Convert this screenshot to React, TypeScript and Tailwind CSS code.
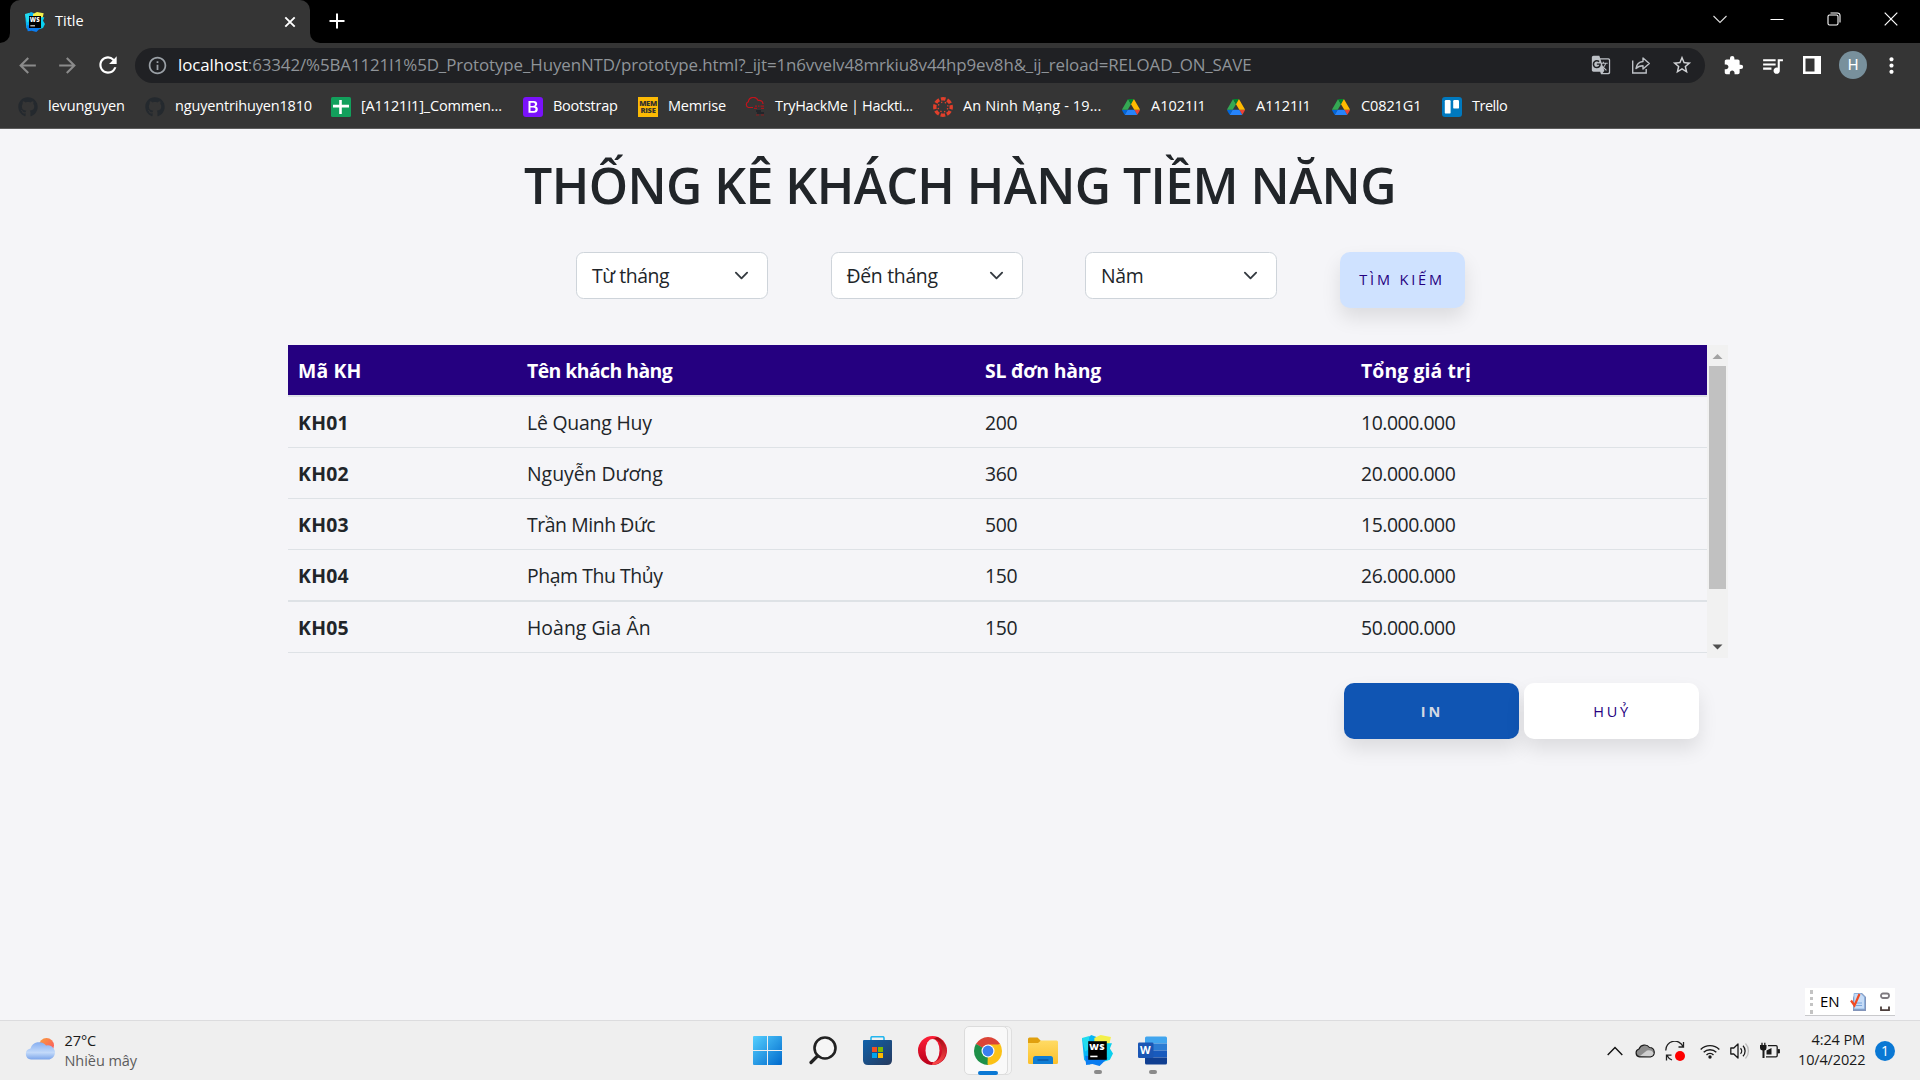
import type { ReactNode } from "react";
import { FaGithub } from "react-icons/fa";
import {
  MdArrowBack,
  MdArrowForward,
  MdExtension,
  MdGTranslate,
  MdMoreVert,
  MdOutlineInfo,
  MdQueueMusic,
  MdRefresh,
  MdStarBorder,
} from "react-icons/md";

/* ---------- logos ---------- */

function WebStormLogo({ className }: { className: string }) {
  return (
    <svg viewBox="0 0 30 30" className={className}>
      <path d="M0 3 L5 3 L9 0 L14 2 L13 16 L7 29 L2 24 Z" fill="#08b6f5" />
      <path d="M12 3 L18 0 L28 2 L26 11 L12 8 Z" fill="#f4f04a" />
      <path d="M24 8 L29 8 L27 13 L30 18 L27 24 L21 26 L20 12 Z" fill="#0ad0ee" />
      <path d="M3 20 L25 22 L20 27 L17 30 L10 28 L4 29 Z" fill="#0a7cf0" />
      <path d="M0 3 L7 1 L6 14 L3 16 Z" fill="#22dcee" />
      <rect x="6" y="6" width="18" height="18" fill="#000" />
      <text x="7" y="14.8" fontSize="9" fontWeight="800" fill="#fff" fontFamily="Open Sans, sans-serif" textLength="15">
        WS
      </text>
      <rect x="8" y="20" width="7" height="1.5" fill="#fff" />
    </svg>
  );
}

function SheetsLogo() {
  return (
    <svg viewBox="0 0 20 20" className="size-5">
      <rect width="20" height="20" rx="1.5" fill="#12a05c" />
      <path d="M8.2 3h2.6v4.8H18v2.6h-7.2V17H8.2v-6.600H2V7.800h6.200z" fill="#fff" />
    </svg>
  );
}

function BootstrapLogo() {
  return (
    <svg viewBox="0 0 20 20" className="size-5">
      <rect width="20" height="20" rx="3" fill="#7a12fb" />
      <path
        d="M5.500 4h5.300c2.100 0 3.400 1.100 3.400 2.900 0 1.200-.8 2.200-1.900 2.400 1.500.2 2.500 1.300 2.500 2.900 0 2.300-1.500 3.600-4 3.600H5.500zM7.500 5.700v3.200h2.400c1.400 0 2.100-.5 2.100-1.600s-.7-1.600-1.900-1.600zm0 4.700v3.700h2.800c1.500 0 2.200-.6 2.200-1.800s-.8-1.900-2.300-1.900z"
        fill="#fff"
      />
    </svg>
  );
}

function MemriseLogo() {
  return (
    <span className="flex size-5 flex-col items-center justify-center bg-[#fcba04] text-[7.5px] leading-[7px] font-extrabold tracking-[-0.3px] text-[#35322c]">
      <span>MEM</span>
      <span>RISE</span>
    </span>
  );
}

function TryHackMeLogo() {
  return (
    <svg viewBox="0 0 20 20" className="size-5" fill="none">
      <path d="M8 10.500H3.500A3 3 0 0 1 3.300 4.800 5.200 5.200 0 0 1 13.200 3.500a3.700 3.700 0 0 1 4.800 3.500" stroke="#c3141c" strokeWidth="1.2" />
      <path d="M10 9.200h2M13 9.200h1.500M15.500 9.200h3.500M9 11.300h3M16 11.300h3" stroke="#a5161c" strokeWidth="1.2" />
      <path d="M11 14h5M12 16h7" stroke="#1c2027" strokeWidth="1.3" />
      <path d="M11 18h3M16 18h3" stroke="#8c1a1c" strokeWidth="1.2" />
    </svg>
  );
}

function CanvasLogo() {
  return (
    <svg viewBox="0 0 20 20" className="size-5" fill="none">
      <circle cx="10" cy="10" r="8.2" stroke="#e13f2b" strokeWidth="3.4" strokeDasharray="4.64 1.8" strokeDashoffset="2.32" />
      <circle cx="10" cy="10" r="4.9" stroke="#e13f2b" strokeWidth="1.4" strokeDasharray="1.3 2.548" strokeDashoffset="-1.25" />
    </svg>
  );
}

function DriveLogo() {
  return (
    <svg viewBox="0 0 87.3 78" className="h-4 w-[18px]">
      <path d="m6.6 66.850 3.850 6.650c.8 1.400 1.950 2.500 3.300 3.300l13.750-23.800h-27.500c0 1.550.4 3.100 1.200 4.500z" fill="#0066da" />
      <path d="m43.650 25-13.750-23.800c-1.350.8-2.500 1.900-3.300 3.300l-25.400 44a9.060 9.060 0 0 0 -1.200 4.500h27.500z" fill="#34a853" />
      <path d="m73.550 76.800c1.350-.8 2.500-1.900 3.300-3.300l1.600-2.750 7.650-13.250c.8-1.400 1.200-2.950 1.200-4.500h-27.502l5.852 11.500z" fill="#ea4335" />
      <path d="m43.650 25 13.750-23.800c-1.350-.8-2.900-1.200-4.500-1.200h-18.500c-1.600 0-3.150.45-4.500 1.200z" fill="#00832d" />
      <path d="m59.800 53h-32.300l-13.750 23.800c1.350.8 2.900 1.200 4.500 1.200h50.800c1.600 0 3.150-.45 4.500-1.200z" fill="#2684fc" />
      <path d="m73.400 26.500-12.700-22c-.8-1.400-1.950-2.500-3.300-3.300l-13.750 23.800 16.150 28h27.450c0-1.550-.4-3.100-1.200-4.500z" fill="#ffba00" />
    </svg>
  );
}

function TrelloLogo() {
  return (
    <svg viewBox="0 0 20 20" className="size-5">
      <rect width="20" height="20" rx="3" fill="#0079bf" />
      <rect x="2.8" y="3" width="5.8" height="13.6" rx="1.2" fill="#fff" />
      <rect x="11.2" y="3" width="5.8" height="8.6" rx="1.2" fill="#fff" />
    </svg>
  );
}

/* ---------- browser chrome ---------- */

function TabStrip() {
  return (
    <div className="flex h-[43px] bg-black">
      <div className="flex w-[10px] items-end bg-[#353535]">
        <div className="h-full w-full rounded-br-[10px] bg-black" />
      </div>
      <div className="w-[300px] bg-black">
        <div className="flex h-[43px] items-center rounded-t-[10px] bg-[#353535] pl-[15px]">
          <WebStormLogo className="size-5" />
          <span className="ml-[10px] pb-[2px] text-[14.5px] text-white">Title</span>
          <svg viewBox="0 0 12 12" className="mr-[14px] ml-auto size-[12px]" stroke="#fff" strokeWidth="1.9">
            <path d="M1.300 1.300 10.700 10.700M10.700 1.300 1.300 10.700" />
          </svg>
        </div>
      </div>
      <div className="w-[10px] bg-[#353535]">
        <div className="h-full w-full rounded-bl-[10px] bg-black" />
      </div>
      <svg viewBox="0 0 16 16" className="mt-[13px] ml-[9px] size-4" stroke="#fff" strokeWidth="2">
        <path d="M8 .5v15M.5 8h15" />
      </svg>
      <div className="mt-[11px] mr-[22px] ml-auto flex h-4 items-center gap-[43px]">
        <svg viewBox="0 0 14 14" className="size-[14px]" stroke="#ddd" fill="none" strokeWidth="1.1">
          <path d="m.5 4 6.500 6.500L13.500 4" />
        </svg>
        <svg viewBox="0 0 14 14" className="size-[14px]" stroke="#fff" strokeWidth="1">
          <path d="M.5 7.500h13" />
        </svg>
        <svg viewBox="0 0 14 14" className="size-[14px]" stroke="#fff" fill="none" strokeWidth="1.1">
          <rect x="1" y="3" width="10" height="10" rx="1.5" />
          <path d="M3.500 1h7A2.500 2.500 0 0 1 13 3.500v7" />
        </svg>
        <svg viewBox="0 0 14 14" className="size-[14px]" stroke="#fff" strokeWidth="1.2">
          <path d="m.7.7 12.600 12.600M13.300.7.7 13.300" />
        </svg>
      </div>
    </div>
  );
}

function ShareIcon() {
  return (
    <svg viewBox="0 0 20 20" className="size-5" fill="none" stroke="#bdc1c6" strokeWidth="1.4">
      <path d="M1.700 5.500V18h13.500v-4" />
      <path d="M5 13.500c.6-4.300 3-6.700 7-7V3l6.300 5.500L12 14v-3.300c-3.200 0-5.400.9-7 2.800z" strokeLinejoin="round" />
    </svg>
  );
}

function Toolbar() {
  return (
    <div className="flex h-[43px] items-center pt-px pr-[15px] pl-[15px]">
      <MdArrowBack className="size-[25px] text-[#8b8b8b]" />
      <MdArrowForward className="ml-[15px] size-[25px] text-[#8b8b8b]" />
      <MdRefresh className="ml-[15px] size-[26px] text-white" />
      <div className="ml-[14px] flex h-[35px] w-[1570px] items-center rounded-full bg-[#202124] pr-[12px] pl-3">
        <MdOutlineInfo className="size-[21px] text-[#9aa0a6]" />
        <div className="ml-[10px] text-[16.9px] tracking-[-0.1px] whitespace-nowrap text-[#8f9499]">
          <span className="text-white">localhost</span>
          :63342/%5BA1121I1%5D_Prototype_HuyenNTD/prototype.html?_ijt=1n6vvelv48mrkiu8v44hp9ev8h&amp;_ij_reload=RELOAD_ON_SAVE
        </div>
        <div className="ml-auto flex items-center gap-[20px]">
          <MdGTranslate className="size-5 text-[#bdc1c6]" />
          <ShareIcon />
          <MdStarBorder className="size-[22px] text-[#d0d2d5]" />
        </div>
      </div>
      <MdExtension className="ml-[18px] size-[21px] text-white" />
      <MdQueueMusic className="ml-[16px] size-[25px] text-white" />
      <svg viewBox="0 0 18 18" className="ml-[18px] size-[18px]">
        <path d="M0 0h18v18H0zM2.500 2.500v13h9v-13z" fill="#fff" fillRule="evenodd" />
      </svg>
      <div className="ml-[18px] flex size-7 items-center justify-center rounded-full bg-[#78909c] font-[Roboto] text-[15px] text-white">
        H
      </div>
      <MdMoreVert className="ml-[12px] size-[25px] shrink-0 text-white" />
    </div>
  );
}

const github = <FaGithub className="size-5 text-[#24292e]" />;
const drive = <DriveLogo />;

const bookmarks: { icon: ReactNode; label: string; width: string; tracking: string }[] = [
  { icon: github, label: "levunguyen", width: "w-[127px]", tracking: "tracking-[-0.1px]" },
  { icon: github, label: "nguyentrihuyen1810", width: "w-[186px]", tracking: "tracking-[-0.17px]" },
  { icon: <SheetsLogo />, label: "[A1121I1]_Commen...", width: "w-[192px]", tracking: "tracking-[-0.15px]" },
  { icon: <BootstrapLogo />, label: "Bootstrap", width: "w-[115px]", tracking: "tracking-[-0.26px]" },
  { icon: <MemriseLogo />, label: "Memrise", width: "w-[107px]", tracking: "tracking-[-0.2px]" },
  { icon: <TryHackMeLogo />, label: "TryHackMe | Hackti...", width: "w-[188px]", tracking: "tracking-[-0.34px]" },
  { icon: <CanvasLogo />, label: "An Ninh Mạng - 19...", width: "w-[188px]", tracking: "tracking-[0.12px]" },
  { icon: drive, label: "A1021I1", width: "w-[105px]", tracking: "tracking-[0px]" },
  { icon: drive, label: "A1121I1", width: "w-[105px]", tracking: "tracking-[0px]" },
  { icon: drive, label: "C0821G1", width: "w-[111px]", tracking: "tracking-[-0.1px]" },
  { icon: <TrelloLogo />, label: "Trello", width: "w-[90px]", tracking: "tracking-[-0.5px]" },
];

function BookmarksBar() {
  return (
    <div className="flex h-[43px] items-center border-b border-[#5c5c5c] pb-px pl-[18px]">
      {bookmarks.map((b) => (
        <div key={b.label} className={`flex items-center gap-[10px] ${b.width}`}>
          <span className="flex w-5 shrink-0 justify-center">{b.icon}</span>
          <span className={`pb-px text-[14.5px] whitespace-nowrap text-white ${b.tracking}`}>{b.label}</span>
        </div>
      ))}
    </div>
  );
}

/* ---------- page ---------- */

const filters = [
  { label: "Từ tháng", tracking: "tracking-[-0.42px]" },
  { label: "Đến tháng", tracking: "tracking-[-0.3px]" },
  { label: "Năm", tracking: "tracking-[-0.3px]" },
];

function Filters() {
  return (
    <div className="flex gap-[62.5px] pl-[576px]">
      {filters.map((f) => (
        <div
          key={f.label}
          className="flex h-[47px] w-[192px] items-center justify-between rounded-[7.5px] border border-[#ced4da] bg-white pr-[18px] pl-[15px] text-[19.4px] text-[#212529]"
        >
          <span className={f.tracking}>{f.label}</span>
          <svg viewBox="0 0 16 16" className="size-[15px]" fill="none" stroke="#343a40" strokeWidth="2" strokeLinecap="round" strokeLinejoin="round">
            <path d="m2 5 6 6 6-6" />
          </svg>
        </div>
      ))}
      <button className="h-14 w-[125px] rounded-[10px] bg-[#cfe2ff] text-[14.5px] font-medium tracking-[2.85px] whitespace-nowrap text-[#250080] shadow-[0_10px_19px_rgba(0,0,0,0.1)]">
        TÌM KIẾM
      </button>
    </div>
  );
}

const columns = [
  { title: "Mã KH", tracking: "tracking-[0.15px]" },
  { title: "Tên khách hàng", tracking: "tracking-[-0.55px]" },
  { title: "SL đơn hàng", tracking: "tracking-[-0.22px]" },
  { title: "Tổng giá trị", tracking: "tracking-[0.1px]" },
];

const customers = [
  { id: "KH01", name: "Lê Quang Huy", orders: "200", total: "10.000.000", tracking: "tracking-[-0.2px]", row: "h-[53px] border-t-2 border-b" },
  { id: "KH02", name: "Nguyễn Dương", orders: "360", total: "20.000.000", tracking: "tracking-[0px]", row: "h-[51px] border-b" },
  { id: "KH03", name: "Trần Minh Đức", orders: "500", total: "15.000.000", tracking: "tracking-[-0.42px]", row: "h-[51px] border-b" },
  { id: "KH04", name: "Phạm Thu Thủy", orders: "150", total: "26.000.000", tracking: "tracking-[-0.42px]", row: "h-[52px] border-b-2" },
  { id: "KH05", name: "Hoàng Gia Ân", orders: "150", total: "50.000.000", tracking: "tracking-[0.05px]", row: "h-[51px] border-b" },
];

function CustomerTable() {
  return (
    <div className="ml-[288px] flex h-[313px] w-[1440px]">
      <div className="w-[1419px] text-[19.4px] text-[#212529]">
        <div className="grid h-[50px] grid-cols-[229px_458px_376px_356px] items-center bg-[#250080] pt-[2px] font-bold text-white">
          {columns.map((c) => (
            <span key={c.title} className={`pl-[10px] ${c.tracking}`}>
              {c.title}
            </span>
          ))}
        </div>
        {customers.map((c) => (
          <div
            key={c.id}
            className={`grid grid-cols-[229px_458px_376px_356px] items-center border-[#dee2e6] pt-[2px] *:pl-[10px] ${c.row}`}
          >
            <span className="font-bold tracking-[0.25px]">{c.id}</span>
            <span className={c.tracking}>{c.name}</span>
            <span className="tracking-[-0.3px]">{c.orders}</span>
            <span className="tracking-[-0.45px]">{c.total}</span>
          </div>
        ))}
      </div>
      <div className="flex w-[21px] flex-col items-center bg-[#f1f1f1]">
        <svg viewBox="0 0 21 21" className="h-[21px] w-[21px] shrink-0">
          <path d="M5.500 14 10.500 9l5 5z" fill="#a3a3a3" />
        </svg>
        <div className="h-[223px] w-[17px] bg-[#c1c1c1]" />
        <svg viewBox="0 0 21 21" className="mt-auto h-[21px] w-[21px] shrink-0">
          <path d="M5.500 7.500h10l-5 5z" fill="#505050" />
        </svg>
      </div>
    </div>
  );
}

function Page() {
  return (
    <main className="flex h-[891px] flex-col bg-[#f5f5f8]">
      <h1 className="mt-[21px] h-[71px] text-center text-[50px] leading-[70px] font-semibold tracking-[-0.57px] text-[#212529]">
        THỐNG KÊ KHÁCH HÀNG TIỀM NĂNG
      </h1>
      <div className="mt-[31px] h-[93px]">
        <Filters />
      </div>
      <CustomerTable />
      <div className="mt-[25px] flex gap-[5px] pl-[1344px]">
        <button className="h-14 w-[175px] rounded-[10px] bg-[#1055b3] pt-px pl-px text-[14.5px] font-bold tracking-[3px] text-[#d3d9e3] shadow-[0_10px_19px_rgba(0,0,0,0.1)]">
          IN
        </button>
        <button className="h-14 w-[175px] rounded-[10px] bg-white pt-px pl-px text-[14.5px] font-medium tracking-[2.7px] text-[#250080] shadow-[0_10px_19px_rgba(0,0,0,0.1)]">
          HUỶ
        </button>
      </div>
      <div className="mt-auto mr-[25px] mb-[4px] flex h-[28px] w-[90px] items-center self-end border-b border-[#c9c9cc] bg-white pl-[5px]">
        <div className="h-6 border-l-[3px] border-dotted border-[#c3c3c3]" />
        <span className="ml-[7px] text-[15px] tracking-[-0.2px] text-black">EN</span>
        <svg viewBox="0 0 17 20" className="ml-[11px] h-5 w-[17px]">
          <path d="M5 1h7l4 4v14H3V6z" fill="#8294ba" />
          <path d="M4 1.500h7l3.500 3.500v12H4z" fill="#c6dcf7" stroke="#86aede" strokeWidth=".8" />
          <path d="M6 11h6M6 13.500h6" stroke="#7aa6dd" />
          <path d="M1 8.500 4.500 13.500 9.500 2" fill="none" stroke="#f04a23" strokeWidth="2.2" />
        </svg>
        <svg viewBox="0 0 12 20" className="ml-[12px] h-5 w-3" fill="none" strokeWidth="1.8">
          <rect x="2" y="1.5" width="8" height="4.5" rx="2" stroke="#7e7a80" />
          <path d="M2 14.500v3.700h8v-3.700" stroke="#4b3d3a" />
        </svg>
      </div>
    </main>
  );
}

/* ---------- taskbar ---------- */

function StartIcon() {
  return (
    <svg viewBox="0 0 29 29" className="size-[29px]">
      <defs>
        <linearGradient id="start" x1="0" y1="0" x2="1" y2="1">
          <stop offset="0" stopColor="#55d0ff" />
          <stop offset="1" stopColor="#0069cc" />
        </linearGradient>
      </defs>
      <path d="M1 0h13v14H0V1q0-1 1-1zM15 0h13q1 0 1 1v13H15zM0 15h14v14H1q-1 0-1-1zM15 15h14v13q0 1-1 1H15z" fill="url(#start)" />
    </svg>
  );
}

function SearchIcon() {
  return (
    <svg viewBox="0 0 28 29" className="h-[29px] w-7" fill="none" stroke="#222">
      <circle cx="16" cy="12" r="10.5" strokeWidth="2.6" fill="#f6f6f6" />
      <path d="M8.500 20 2 26.500" strokeWidth="3.2" strokeLinecap="round" />
    </svg>
  );
}

function StoreIcon() {
  return (
    <svg viewBox="0 0 29 29" className="size-[29px]">
      <defs>
        <linearGradient id="store" x1="0" y1="0" x2="1" y2="1">
          <stop offset="0" stopColor="#0f62ab" />
          <stop offset="1" stopColor="#263a5e" />
        </linearGradient>
      </defs>
      <path d="M8 5V2q0-1.300 1.300-1.300h10.400Q21 .7 21 2v3" fill="none" stroke="#23b6ee" strokeWidth="1.6" />
      <path d="M0 5q0-1 1-1h27q1 0 1 1v19q0 5-5 5H5q-5 0-5-5z" fill="url(#store)" />
      <path d="M9 11h5v5H9z" fill="#f25022" />
      <path d="M15 11h5v5h-5z" fill="#7fba00" />
      <path d="M9 17h5v5H9z" fill="#00a4ef" />
      <path d="M15 17h5v5h-5z" fill="#ffb900" />
    </svg>
  );
}

function OperaIcon() {
  return (
    <svg viewBox="0 0 29 29" className="size-[29px]">
      <defs>
        <linearGradient id="operaRing" x1="0" y1="0" x2="0" y2="1">
          <stop offset="0" stopColor="#ff2038" />
          <stop offset="1" stopColor="#b8001a" />
        </linearGradient>
        <linearGradient id="operaSide" x1="0" y1="0" x2="0" y2="1">
          <stop offset="0" stopColor="#a00812" />
          <stop offset="1" stopColor="#ff4c4c" />
        </linearGradient>
      </defs>
      <circle cx="14.5" cy="14.5" r="14.5" fill="url(#operaRing)" />
      <path d="M15 3c5 0 9 5 9 11.500S20 26 15 26l-1 3a14.500 14.500 0 0 0 5-28z" fill="url(#operaSide)" />
      <ellipse cx="14.5" cy="14.5" rx="7" ry="11.5" fill="#f1f1f1" />
    </svg>
  );
}

function ChromeIcon() {
  return (
    <svg viewBox="0 0 28 28" className="size-7">
      <path d="M14 14 1.876 7A14 14 0 0 1 26.124 7z" fill="#db4437" />
      <path d="M14 14 26.124 7A14 14 0 0 1 14 28z" fill="#fbc116" />
      <path d="M14 14V28A14 14 0 0 1 1.876 7z" fill="#1e9048" />
      <path d="M14 7.500h12.400L14 14z" fill="#fbc116" />
      <path d="M19.600 17.200 13.500 28l.5-14z" fill="#fbc116" />
      <path d="M8.400 17.200 1.900 7 14 14z" fill="#1e9048" />
      <circle cx="14" cy="14" r="6.5" fill="#fff" />
      <circle cx="14" cy="14" r="5.4" fill="#3a7ff0" />
    </svg>
  );
}

function ExplorerIcon() {
  return (
    <svg viewBox="0 0 30 27" className="h-[27px] w-[30px]">
      <defs>
        <linearGradient id="folder" x1="0" y1="0" x2="0" y2="1">
          <stop offset="0" stopColor="#ffdb65" />
          <stop offset="1" stopColor="#fcc02b" />
        </linearGradient>
      </defs>
      <path d="M0 2q0-1.500 1.500-1.500h8L13 4v5H0z" fill="#e0a00e" />
      <path d="M0 6h10l3-2.500h15.500Q30 3.500 30 5v20.500q0 1.500-1.500 1.500h-27Q0 27 0 25.500z" fill="url(#folder)" />
      <path d="M5 27v-5.500Q5 19 7.500 19h15q2.500 0 2.500 2.500V27z" fill="#0f7dd4" />
      <path d="M9.500 23h11" stroke="#0a4f97" strokeWidth="1.2" />
    </svg>
  );
}

function WordIcon() {
  return (
    <svg viewBox="0 0 29 29" className="size-[29px]">
      <path d="M7 2q0-1.500 1.500-1.500h19Q29 .5 29 2v5.500H7z" fill="#41a5ee" />
      <path d="M7 7.500h22v7H7z" fill="#2b7cd3" />
      <path d="M7 14.500h22v7H7z" fill="#185abd" />
      <path d="M7 21.500h22V27q0 1.500-1.500 1.500h-19Q7 28.500 7 27z" fill="#103f91" />
      <rect y="6.5" width="15.5" height="15.5" rx="1.3" fill="#1b56b4" />
      <text x="2" y="18.3" fontSize="11" fontWeight="700" fill="#fff" fontFamily="Open Sans, sans-serif">
        W
      </text>
    </svg>
  );
}

function WeatherIcon() {
  return (
    <svg viewBox="0 0 30 22" className="h-[22px] w-[30px]">
      <defs>
        <linearGradient id="sun" x1="0" y1="0" x2="1" y2="1">
          <stop offset="0" stopColor="#f9a03c" />
          <stop offset="1" stopColor="#fb4f64" />
        </linearGradient>
        <linearGradient id="cloud" x1="0" y1="0" x2="0" y2="1">
          <stop offset="0" stopColor="#86aef0" />
          <stop offset="0.6" stopColor="#c3dafa" />
          <stop offset="1" stopColor="#7ba5ea" />
        </linearGradient>
      </defs>
      <circle cx="21.5" cy="7.5" r="7.5" fill="url(#sun)" />
      <path d="M6 21.500A5.600 5.600 0 0 1 5.500 10.400 9 9 0 0 1 21 7.500a7 7 0 0 1 3.500 14z" fill="url(#cloud)" />
    </svg>
  );
}

function AppSlot({ children, running }: { children: ReactNode; running?: boolean }) {
  return (
    <div className="relative flex h-full w-[55px] items-center justify-center">
      {children}
      {running && <span className="absolute bottom-[6px] h-1 w-2 rounded-full bg-[#8a8a8a]" />}
    </div>
  );
}

function Tray() {
  return (
    <div className="flex items-center">
      <svg viewBox="0 0 16 10" className="h-[10px] w-4" fill="none" stroke="#111" strokeWidth="1.4">
        <path d="m.7 9 7.300-7.500L15.300 9" />
      </svg>
      <svg viewBox="0 0 20 15" className="ml-3 h-[15px] w-5">
        <path d="M4.500 13.800A4 4 0 0 1 4 6 6 6 0 0 1 14.500 4.500 4.700 4.700 0 0 1 15.500 13.800z" fill="#8c8c8c" stroke="#1c1c1c" strokeWidth="1.2" />
        <path d="M5 13 12 7.500q5-1 6.500 3-.6 2.600-3 2.700z" fill="#cfcfcf" />
      </svg>
      <svg viewBox="0 0 20 20" className="ml-[10px] size-5" fill="none" stroke="#222" strokeWidth="1.3">
        <path d="M.8 9.500A9 9 0 0 1 18 5.500M18.500 1v5h-5M7 19a9 9 0 0 1-5-4.500M1.500 19.500v-5.300h5" />
        <circle cx="15" cy="15" r="5" fill="#fe0000" stroke="none" />
      </svg>
      <svg viewBox="0 0 20 16" className="ml-[15px] h-4 w-5" fill="none" stroke="#1a1a1a" strokeWidth="1.4">
        <path d="M.7 6.500a13 13 0 0 1 18.600 0M3.700 9.300a9 9 0 0 1 12.600 0M6.500 12a5 5 0 0 1 7 0" />
        <circle cx="10" cy="14" r="1.7" fill="#1a1a1a" stroke="none" />
      </svg>
      <svg viewBox="0 0 20 18" className="ml-[10px] h-[18px] w-5" fill="none" stroke="#1a1a1a" strokeWidth="1.3">
        <path d="M.8 6v6h3l4.200 4V2L3.800 6z" strokeLinejoin="round" />
        <path d="M10.500 6.200a4 4 0 0 1 0 5.600M13 3.800a7.500 7.500 0 0 1 0 10.400" />
        <path d="M15.500 1.500a11 11 0 0 1 0 15" stroke="#bbb" />
      </svg>
      <svg viewBox="0 0 20 18" className="ml-[10px] h-[18px] w-5" fill="none" stroke="#1a1a1a" strokeWidth="1.3">
        <path d="M8 3.700h8q1.200 0 1.200 1.200v8.700q0 1.200-1.200 1.200H6" />
        <path d="M18 7.500h1.500v3.500H18z" fill="#1a1a1a" strokeWidth=".8" />
        <path d="M0 3h6.500v3q0 2-2 2.500V16H2.500V8.500Q0 8 0 6z" fill="#1a1a1a" stroke="none" />
        <path d="M2 .8V4M4.800.8V4" />
        <path d="M6.500 8.500 11.500 6v6.500h-5z" fill="#1a1a1a" stroke="none" />
      </svg>
    </div>
  );
}

function Taskbar() {
  return (
    <footer className="flex h-[60px] border-t border-[#dcdcde] bg-[#efefef]">
      <div className="flex w-[740px] items-start pt-[8px] pl-[25px]">
        <span className="mt-[9px]">
          <WeatherIcon />
        </span>
        <div className="ml-[9.5px] text-[14.5px] leading-[20px] whitespace-nowrap">
          <div className="pt-[2px] tracking-[-0.1px] text-[#1a1a1a]">27°C</div>
          <div className="tracking-[-0.05px] text-[#5c5c5c]">Nhiều mây</div>
        </div>
      </div>
      <div className="flex h-full">
        <AppSlot>
          <StartIcon />
        </AppSlot>
        <AppSlot>
          <SearchIcon />
        </AppSlot>
        <AppSlot>
          <StoreIcon />
        </AppSlot>
        <AppSlot>
          <OperaIcon />
        </AppSlot>
        <AppSlot>
          <span className="absolute top-[5px] left-[9px] h-[49px] w-[43px] rounded-[5px] border border-[#dfdfdf] bg-[#f5f5f5]" />
          <span className="absolute top-[5px] left-[4px] h-[49px] w-[44px] rounded-[5px] border border-[#dcdcdc] bg-[#f9f9f9]" />
          <span className="relative">
            <ChromeIcon />
          </span>
          <span className="absolute bottom-[5px] h-1 w-5 rounded-full bg-[#0a78d4]" />
        </AppSlot>
        <AppSlot>
          <ExplorerIcon />
        </AppSlot>
        <AppSlot running>
          <WebStormLogo className="size-[31px]" />
        </AppSlot>
        <AppSlot running>
          <WordIcon />
        </AppSlot>
      </div>
      <div className="mr-[25px] ml-auto flex items-center">
        <Tray />
        <div className="mr-px ml-[18px] w-[67px] pb-[2px] text-right text-[14.5px] leading-[20px] whitespace-nowrap text-[#1a1a1a]">
          <div className="tracking-[-0.1px]">4:24 PM</div>
          <div className="tracking-[-0.15px]">10/4/2022</div>
        </div>
        <div className="ml-[9px] flex size-5 items-center justify-center rounded-full bg-[#0a78d4] text-[14px] text-white">1</div>
      </div>
    </footer>
  );
}

export default function App() {
  return (
    <div className="h-[1080px] w-[1920px] overflow-hidden font-['Open_Sans','Noto_Sans',sans-serif]">
      <header className="bg-[#353535]">
        <TabStrip />
        <Toolbar />
        <BookmarksBar />
      </header>
      <Page />
      <Taskbar />
    </div>
  );
}
